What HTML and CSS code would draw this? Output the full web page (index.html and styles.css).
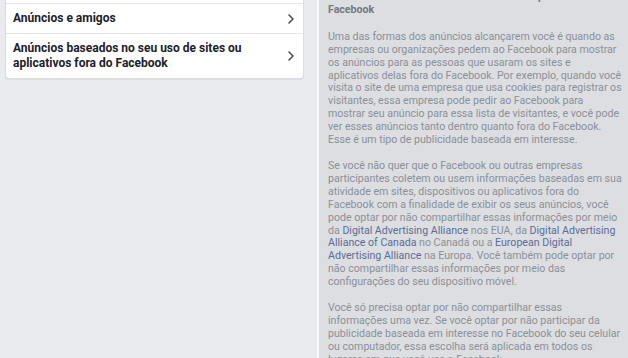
FILE: index.html
```html
<!DOCTYPE html>
<html lang="pt-BR">
<head>
<meta charset="utf-8">
<title>Anúncios</title>
<link rel="stylesheet" href="styles.css">
</head>
<body>
<div class="page">
  <div class="left">
    <div class="card">
      <div class="row">
        <span class="row-text">Anúncios e amigos</span>
        <svg class="chev" viewBox="0 0 6 10" width="6" height="10"><path d="M1 1l4 4-4 4" fill="none" stroke="#4b4f56" stroke-width="1.6" stroke-linecap="round" stroke-linejoin="round"/></svg>
      </div>
      <div class="row">
        <span class="row-text">Anúncios baseados no seu uso de sites ou<br>aplicativos fora do Facebook</span>
        <svg class="chev" viewBox="0 0 6 10" width="6" height="10"><path d="M1 1l4 4-4 4" fill="none" stroke="#4b4f56" stroke-width="1.6" stroke-linecap="round" stroke-linejoin="round"/></svg>
      </div>
    </div>
  </div>
  <div class="gap"></div>
  <div class="right">
    <h1 class="title">Anúncios baseados no seu uso de sites ou aplicativos fora do<br>Facebook</h1>
    <p>Uma das formas dos anúncios alcançarem você é quando as<br>empresas ou organizações pedem ao Facebook para mostrar<br>os anúncios para as pessoas que usaram os sites e<br>aplicativos delas fora do Facebook. Por exemplo, quando você<br>visita o site de uma empresa que usa cookies para registrar os<br>visitantes, essa empresa pode pedir ao Facebook para<br>mostrar seu anúncio para essa lista de visitantes, e você pode<br>ver esses anúncios tanto dentro quanto fora do Facebook.<br>Esse é um tipo de publicidade baseada em interesse.</p>
    <p>Se você não quer que o Facebook ou outras empresas<br>participantes coletem ou usem informações baseadas em sua<br>atividade em sites, dispositivos ou aplicativos fora do<br>Facebook com a finalidade de exibir os seus anúncios, você<br>pode optar por não compartilhar essas informações por meio<br>da <a class="link">Digital Advertising Alliance</a> nos EUA, da <a class="link">Digital Advertising<br>Alliance of Canada</a> no Canadá ou a <a class="link">European Digital<br>Advertising Alliance</a> na Europa. Você também pode optar por<br>não compartilhar essas informações por meio das<br>configurações do seu dispositivo móvel.</p>
    <p>Você só precisa optar por não compartilhar essas<br>informações uma vez. Se você optar por não participar da<br>publicidade baseada em interesse no Facebook do seu celular<br>ou computador, essa escolha será aplicada em todos os<br>lugares em que você usa o Facebook.</p>
  </div>
</div>
</body>
</html>
```
FILE: styles.css
```css
html, body {
  margin: 0;
  padding: 0;
  height: 100%;
  overflow: hidden;
}
body {
  font-family: Roboto, "Noto Sans", sans-serif;
}
.page {
  display: flex;
  width: 628px;
  height: 358px;
}
.left {
  width: 317px;
  flex: none;
  background: #e9ebee;
  padding-left: 5px;
  box-sizing: border-box;
}
.card {
  width: 297px;
  background: #fff;
  border: 1px solid #dadde1;
  border-top: none;
  border-radius: 0 0 4px 4px;
  box-shadow: 0 1px 1px rgba(0,0,0,0.06);
  padding-top: 3px;
}
.row {
  display: flex;
  align-items: center;
  justify-content: space-between;
  border-top: 1px solid #e5e6e9;
  padding: 7px 8px 7px 7px;
}
.row-text {
  font-size: 12px;
  line-height: 15px;
  font-weight: 700;
  color: #1d2129;
}
.chev {
  flex: none;
  margin-right: 1px;
}
.gap {
  width: 2px;
  flex: none;
  background: #fbfbfc;
}
.right {
  flex: 1;
  background: #dcdee2;
  padding: 0 6px 0 9px;
  color: #8b9097;
  font-size: 10.6px;
  line-height: 12.9px;
  overflow: hidden;
  white-space: nowrap;
}
.title {
  margin: -9px 0 14px;
  font-size: 10.6px;
  line-height: 12.9px;
  font-weight: 700;
  color: #747880;
}
.right p {
  margin: 0 0 13px;
}
.link {
  color: #5a6c98;
}
```
